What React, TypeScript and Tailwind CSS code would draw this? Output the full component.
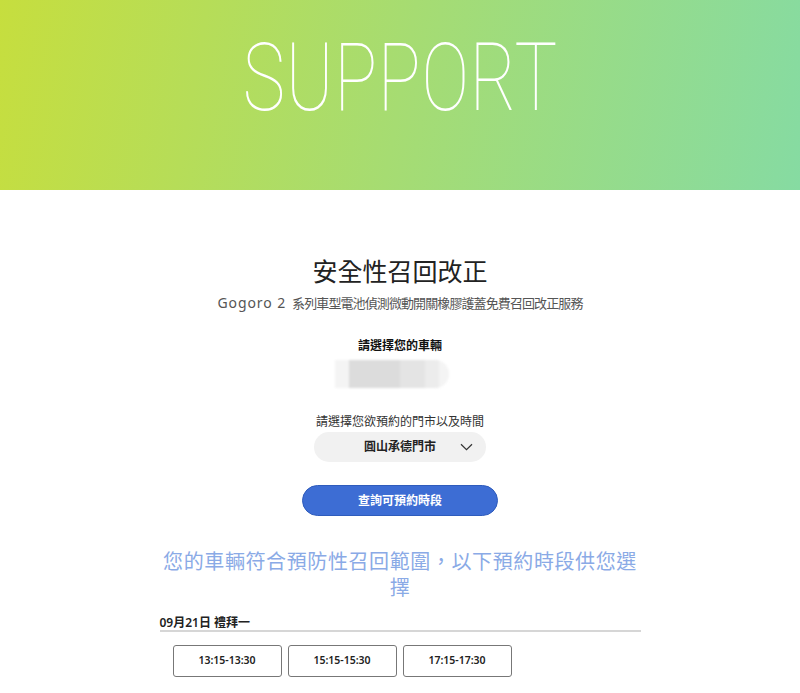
import React from "react";

const slots = ["13:15-13:30", "15:15-15:30", "17:15-17:30"];

export default function App() {
  return (
    <div
      className="min-h-[693px] w-full bg-white text-[#222]"
      style={{ fontFamily: '"Noto Sans", "Noto Sans CJK TC", sans-serif' }}
    >
      <header className="flex h-[190px] w-full items-center justify-center bg-[linear-gradient(100deg,#c6de3e_0%,#a6dc72_50%,#86dba2_100%)]">
        <h1
          className="mt-[-34px] origin-center scale-x-[0.76] text-[94px] font-thin leading-none tracking-[1px] text-white"
          style={{ fontFamily: "Roboto, sans-serif", fontWeight: 100 }}
        >
          SUPPORT
        </h1>
      </header>

      <main className="mx-auto flex w-[481px] flex-col items-center">
        <h2 className="mt-[65px] text-[25px] font-normal leading-[32px] text-[#222]">
          安全性召回改正
        </h2>
        <p className="mt-[7px] flex items-baseline text-[13px] leading-[18px] text-[#555]">
          <span className="mr-[6px] text-[14px] tracking-[0.9px]">Gogoro 2</span>
          <span className="tracking-[-0.9px]">系列車型電池偵測微動開關橡膠護蓋免費召回改正服務</span>
        </p>

        <p className="mt-[26px] text-[12px] font-bold leading-[16px] text-[#111]">
          請選擇您的車輛
        </p>
        <div className="relative ml-[-16px] mt-[6px] h-[28px] w-[114px] overflow-hidden rounded-r-full bg-[#f4f4f4] blur-[1px]">
          <div className="ml-[14px] flex h-full">
            <div className="h-full w-[51px] bg-[#dcdcdc]" />
            <div className="h-full w-[25px] bg-[#e4e4e4]" />
            <div className="h-full w-[14px] bg-[#ececec]" />
          </div>
        </div>

        <p className="mt-[26px] text-[12px] leading-[16px] text-[#333]">
          請選擇您欲預約的門市以及時間
        </p>
        <div className="relative mt-[2px] flex h-[30px] w-[172px] items-center justify-center rounded-full bg-[#f1f1f1]">
          <span className="text-[12px] font-semibold text-[#222]">圓山承德門市</span>
          <svg
            className="absolute right-[13px] top-[11px]"
            width="13"
            height="8"
            viewBox="0 0 13 8"
            fill="none"
          >
            <path d="M1 1.2L6.5 6.6L12 1.2" stroke="#333" strokeWidth="1.2" />
          </svg>
        </div>

        <button className="mt-[23px] flex h-[31px] w-[196px] items-center justify-center rounded-full border border-[#2f5cbc] bg-[#3d6dd4] text-[12px] font-semibold text-white">
          查詢可預約時段
        </button>

        <p className="mt-[33px] w-[480px] text-center text-[20px] leading-[26px] tracking-[0.6px] text-[#8aaae6]">
          您的車輛符合預防性召回範圍，以下預約時段供您選擇
        </p>

        <div className="mt-[14px] w-full border-b-2 border-[#d6d6d6]">
          <p className="text-[12px] font-semibold leading-[15px] text-[#222]">09月21日 禮拜一</p>
        </div>

        <div className="mt-[13px] flex w-full gap-[6px] pl-[13px]">
          {slots.map((s) => (
            <div
              key={s}
              className="flex h-[32px] w-[109px] items-center justify-center rounded-[3px] border border-[#777] text-[10.5px] font-semibold text-[#222]"
            >
              {s}
            </div>
          ))}
        </div>
      </main>
    </div>
  );
}
